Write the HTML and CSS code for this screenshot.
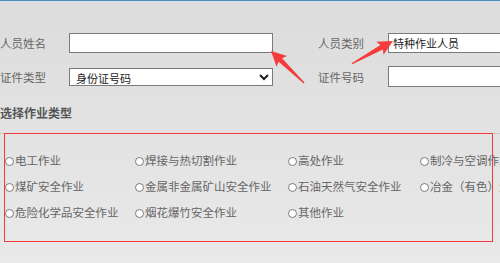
FILE: index.html
```html
<!DOCTYPE html>
<html lang="zh-CN">
<head>
    <meta charset="UTF-8">
    <title>人员信息</title>
    <link rel="stylesheet" href="styles.css">
</head>
<body>
    <div class="page">
        <div class="form">
            <div class="form-row">
                <div class="field">
                    <label class="label">人员姓名</label>
                    <input class="input" type="text">
                </div>
                <div class="field">
                    <label class="label label-right">人员类别</label>
                    <input class="input input-wide" type="text" value="特种作业人员">
                </div>
            </div>
            <div class="form-row">
                <div class="field">
                    <label class="label">证件类型</label>
                    <select class="select">
                        <option>身份证号码</option>
                    </select>
                </div>
                <div class="field">
                    <label class="label label-right">证件号码</label>
                    <input class="input input-wide input-tall" type="text">
                </div>
            </div>
        </div>

        <div class="section-title">选择作业类型</div>

        <div class="options">
            <label class="option"><input type="radio" name="work"> 电工作业</label>
            <label class="option"><input type="radio" name="work"> 焊接与热切割作业</label>
            <label class="option"><input type="radio" name="work"> 高处作业</label>
            <label class="option"><input type="radio" name="work"> 制冷与空调作业</label>
            <label class="option"><input type="radio" name="work"> 煤矿安全作业</label>
            <label class="option"><input type="radio" name="work"> 金属非金属矿山安全作业</label>
            <label class="option"><input type="radio" name="work"> 石油天然气安全作业</label>
            <label class="option"><input type="radio" name="work"> 冶金（有色）生产安全作业</label>
            <label class="option"><input type="radio" name="work"> 危险化学品安全作业</label>
            <label class="option"><input type="radio" name="work"> 烟花爆竹安全作业</label>
            <label class="option"><input type="radio" name="work"> 其他作业</label>
        </div>

        <!-- annotation arrows -->
        <svg class="arrows" width="500" height="263" viewBox="0 0 500 263">
            <polygon transform="translate(271 51) rotate(44)" points="0,0 15,-7.5 13,-2.5 46,-0.6 46,0.6 13,2.5 15,7.5"/>
            <polygon transform="translate(393 41) rotate(151)" points="0,0 15,-7.5 13,-2.5 47,-0.6 47,0.6 13,2.5 15,7.5"/>
        </svg>
    </div>
</body>
</html>
```

FILE: styles.css
```css
html, body {
    margin: 0;
    padding: 0;
}
body {
    width: 500px;
    height: 263px;
    overflow: hidden;
    font-family: "Noto Sans CJK SC", "Noto Sans", sans-serif;
    color: #666;
    background: linear-gradient(#dcdcdc, #e9e9e9);
}
.page {
    position: relative;
    height: 262px;
    border-top: 1px solid #4a8fc0;
}
.form {
    padding-top: 32px;
    display: flex;
    flex-direction: column;
    gap: 13px;
}
.form-row {
    display: flex;
    align-items: center;
}
.field {
    display: flex;
    align-items: center;
    width: 318px;
    flex-shrink: 0;
}
.label {
    width: 69px;
    font-size: 11.5px;
    color: #666;
    white-space: nowrap;
}
.label-right {
    width: 70px;
}
.input {
    box-sizing: border-box;
    width: 204px;
    height: 20px;
    border: 1px solid #7a7a7a;
    background: #fff;
    padding: 0 4px;
    font-family: inherit;
    font-size: 11px;
    color: #222;
    outline: none;
}
.input-wide {
    width: 130px;
}
.input-tall {
    height: 21px;
}
.select {
    box-sizing: border-box;
    width: 204px;
    height: 18px;
    border: 1px solid #7a7a7a;
    border-radius: 0;
    background: #fff;
    padding: 0 0 0 2px;
    font-family: inherit;
    font-size: 11px;
    color: #222;
}
.section-title {
    margin-top: 16px;
    line-height: 20px;
    padding-bottom: 10px;
    font-size: 12px;
    font-weight: bold;
    color: #555;
    border-bottom: 1px solid #c9c9c9;
}
.options {
    margin: -1px 7px 0 4px;
    height: 109px;
    box-sizing: border-box;
    border: 1px solid #f23a3a;
    padding-top: 13px;
    display: grid;
    grid-template-columns: 130px 153px 132px 200px;
    grid-auto-rows: 26px;
}
.option {
    display: flex;
    align-items: center;
    font-size: 11.5px;
    color: #666;
    white-space: nowrap;
}
.option input {
    appearance: none;
    -webkit-appearance: none;
    box-sizing: border-box;
    width: 9px;
    height: 9px;
    margin: 2px 1px 0 0;
    border: 1px solid #7a7a7a;
    border-radius: 50%;
    background: #fff;
}
.arrows {
    position: absolute;
    left: 0;
    top: -1px;
    fill: #f53b3b;
}
```
